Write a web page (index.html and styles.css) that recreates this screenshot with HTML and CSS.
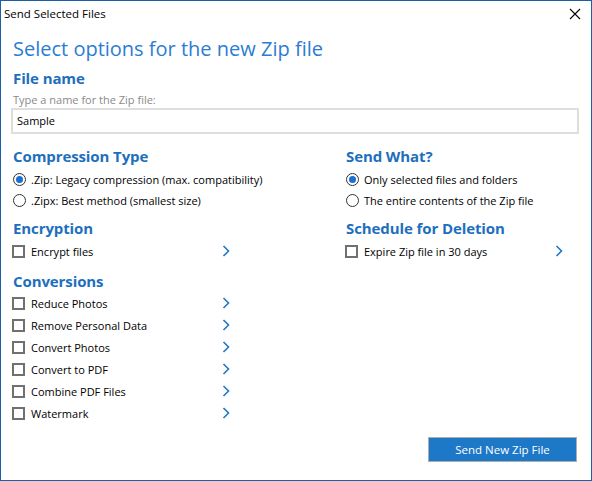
FILE: index.html
```html
<!DOCTYPE html>
<html>
<head>
<meta charset="utf-8">
<link rel="stylesheet" href="styles.css">
</head>
<body>
<div class="window">
  <div class="titlebar">
    <span class="title">Send Selected Files</span>
    <svg class="close" width="12" height="12" viewBox="0 0 12 12"><path d="M1 1 L11 11 M11 1 L1 11" stroke="#000" stroke-width="1.1" fill="none"/></svg>
  </div>
  <div class="content">
    <h1 class="main-title">Select options for the new Zip file</h1>
    <h2 class="heading">File name</h2>
    <div class="hint">Type a name for the Zip file:</div>
    <div class="input">Sample</div>

    <div class="columns">
      <div class="col">
        <h2 class="heading sec">Compression Type</h2>
        <div class="row"><span class="radio on"></span><span>.Zip: Legacy compression (max. compatibility)</span></div>
        <div class="row"><span class="radio"></span><span>.Zipx: Best method (smallest size)</span></div>
        <h2 class="heading sec2">Encryption</h2>
        <div class="row opt"><span class="check"></span><span class="label">Encrypt files</span><svg class="chev" width="8" height="12" viewBox="0 0 8 12"><path d="M1.5 1 L6.5 6 L1.5 11" stroke="#1e78c8" stroke-width="1.6" fill="none"/></svg></div>
        <h2 class="heading sec3">Conversions</h2>
        <div class="row opt conv"><span class="check"></span><span class="label">Reduce Photos</span><svg class="chev" width="8" height="12" viewBox="0 0 8 12"><path d="M1.5 1 L6.5 6 L1.5 11" stroke="#1e78c8" stroke-width="1.6" fill="none"/></svg></div>
        <div class="row opt conv"><span class="check"></span><span class="label">Remove Personal Data</span><svg class="chev" width="8" height="12" viewBox="0 0 8 12"><path d="M1.5 1 L6.5 6 L1.5 11" stroke="#1e78c8" stroke-width="1.6" fill="none"/></svg></div>
        <div class="row opt conv"><span class="check"></span><span class="label">Convert Photos</span><svg class="chev" width="8" height="12" viewBox="0 0 8 12"><path d="M1.5 1 L6.5 6 L1.5 11" stroke="#1e78c8" stroke-width="1.6" fill="none"/></svg></div>
        <div class="row opt conv"><span class="check"></span><span class="label">Convert to PDF</span><svg class="chev" width="8" height="12" viewBox="0 0 8 12"><path d="M1.5 1 L6.5 6 L1.5 11" stroke="#1e78c8" stroke-width="1.6" fill="none"/></svg></div>
        <div class="row opt conv"><span class="check"></span><span class="label">Combine PDF Files</span><svg class="chev" width="8" height="12" viewBox="0 0 8 12"><path d="M1.5 1 L6.5 6 L1.5 11" stroke="#1e78c8" stroke-width="1.6" fill="none"/></svg></div>
        <div class="row opt conv"><span class="check"></span><span class="label">Watermark</span><svg class="chev" width="8" height="12" viewBox="0 0 8 12"><path d="M1.5 1 L6.5 6 L1.5 11" stroke="#1e78c8" stroke-width="1.6" fill="none"/></svg></div>
      </div>
      <div class="col">
        <h2 class="heading sec">Send What?</h2>
        <div class="row"><span class="radio on"></span><span>Only selected files and folders</span></div>
        <div class="row"><span class="radio"></span><span>The entire contents of the Zip file</span></div>
        <h2 class="heading sec2">Schedule for Deletion</h2>
        <div class="row opt"><span class="check"></span><span class="label">Expire Zip file in 30 days</span><svg class="chev" width="8" height="12" viewBox="0 0 8 12"><path d="M1.5 1 L6.5 6 L1.5 11" stroke="#1e78c8" stroke-width="1.6" fill="none"/></svg></div>
      </div>
    </div>
    <div class="footer">
      <button class="send">Send New Zip File</button>
    </div>
  </div>
</div>
</body>
</html>
```

FILE: styles.css
```css
* { box-sizing: border-box; }
html, body { margin: 0; padding: 0; background: #fff; }
body { font-family: "Open Sans", "Noto Sans", sans-serif; font-size: 11px; color: #000; }
.window { width: 592px; height: 481px; border: 1px solid #1a5fa8; background: #fff; display: flex; flex-direction: column; }
.titlebar { height: 25px; display: flex; align-items: center; justify-content: space-between; padding: 0 10px 0 3px; }
.title { font-size: 11.5px; }
.close { display: block; }
.content { padding: 0 12px; flex: 1; display: flex; flex-direction: column; }
.main-title { margin: 8px 0 0; height: 30px; line-height: 30px; font-size: 20px; font-weight: 400; color: #2a7dd2; }
.heading { margin: 0; font-size: 15px; font-weight: 700; color: #1d6fbe; height: 18px; line-height: 18px; letter-spacing: -0.1px; }
.main-title + .heading { margin-top: 5px; }
.hint { margin-top: 6px; height: 14px; line-height: 14px; color: #8a8a8a; font-size: 11px; }
.input { margin: 1px 0 0 -2px; height: 26px; border: 2px solid #dedede; padding: 0 4px; line-height: 22px; font-size: 11px; }
.columns { display: grid; grid-template-columns: 333px 1fr; margin-top: 13px; }
.col { display: flex; flex-direction: column; }
.sec2 { margin-top: 8px; }
.sec3 { margin-top: 10px; }
.row { height: 21px; display: flex; align-items: center; }
.heading.sec + .row { margin-top: 4px; }
.opt { width: 217px; height: 22px; }
.heading.sec2 + .opt { margin-top: 3px; }
.heading.sec3 + .opt { margin-top: 2px; }
.label { flex: 1; }
.chev { display: block; }
.radio { width: 13px; height: 13px; border: 1px solid #333; border-radius: 50%; margin-right: 5px; display: flex; align-items: center; justify-content: center; }
.radio.on::after { content: ""; width: 7px; height: 7px; border-radius: 50%; background: #1a6fd0; }
.check { width: 13px; height: 13px; border: 2px solid #707070; margin: 0 6px 0 -1px; }
.footer { display: flex; justify-content: flex-end; margin-top: 13px; padding-right: 2px; }
.send { width: 149px; height: 25px; background: #1e78c8; color: #fff; border: 1px solid #adadad; font-family: "Open Sans", "Noto Sans", sans-serif; font-size: 11.5px; padding: 0; }
```
